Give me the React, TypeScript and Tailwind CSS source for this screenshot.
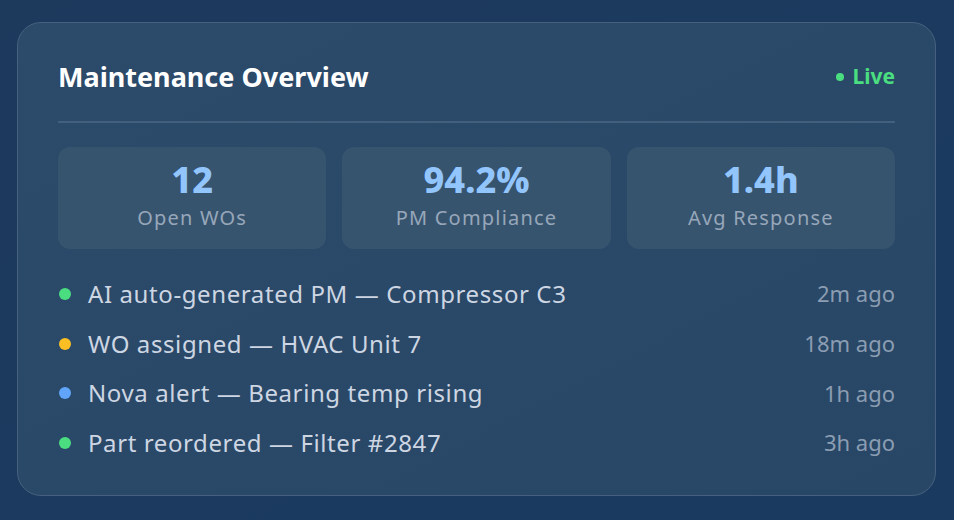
import React from "react";

const stats = [
  { value: "12", label: "Open WOs" },
  { value: "94.2%", label: "PM Compliance" },
  { value: "1.4h", label: "Avg Response" },
];

const items = [
  { color: "bg-[#4ade80]", text: "AI auto-generated PM — Compressor C3", time: "2m ago" },
  { color: "bg-[#fbbf24]", text: "WO assigned — HVAC Unit 7", time: "18m ago" },
  { color: "bg-[#60a5fa]", text: "Nova alert — Bearing temp rising", time: "1h ago" },
  { color: "bg-[#4ade80]", text: "Part reordered — Filter #2847", time: "3h ago" },
];

export default function App() {
  return (
    <div
      className="w-[954px] h-[520px] bg-gradient-to-br from-[#1d3a5d] to-[#1a3a60] pt-[22px] pl-[17px] overflow-hidden"
      style={{ fontFamily: '"Noto Sans", "Open Sans", sans-serif' }}
    >
      <div className="w-[919px] h-[474px] rounded-[24px] border border-[#46617f] bg-gradient-to-br from-[#2c4a69] to-[#284766] px-[40px] pt-[38px]">
        <div className="flex items-center justify-between h-[32px]">
          <div className="text-[27px] font-bold text-white">Maintenance Overview</div>
          <div className="flex items-center gap-[8px] text-[21px] font-bold text-[#4ade80]">
            <span className="w-[8px] h-[8px] rounded-full bg-[#4ade80]" />
            Live
          </div>
        </div>
        <div className="mt-[28px] h-[2px] bg-[#42607e]" />
        <div className="mt-[24px] grid grid-cols-3 gap-[16px]">
          {stats.map((s) => (
            <div
              key={s.label}
              className="h-[102px] rounded-[12px] bg-[#37546f] flex flex-col items-center pt-[13px]"
            >
              <div className="text-[36px] leading-[40px] font-extrabold text-[#93c5fd]">{s.value}</div>
              <div className="mt-[5px] text-[20px] leading-[26px] tracking-[1.2px] text-[#97a7ba]">{s.label}</div>
            </div>
          ))}
        </div>
        <div className="mt-[20px] flex flex-col">
          {items.map((it) => (
            <div key={it.text} className="flex items-center h-[49.7px]">
              <span className={`w-[12px] h-[12px] rounded-full ${it.color} ml-[1px] mr-[17px]`} />
              <span className="flex-1 text-[24px] tracking-[0.6px] text-[#cdd6e2]">{it.text}</span>
              <span className="text-[22px] text-[#8b9db2]">{it.time}</span>
            </div>
          ))}
        </div>
      </div>
    </div>
  );
}
